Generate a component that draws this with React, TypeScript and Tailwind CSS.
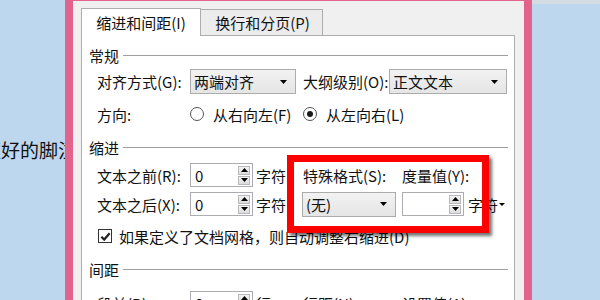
import type { ReactNode } from 'react'

const font = "font-['Microsoft_YaHei','Noto_Sans_CJK_SC',sans-serif]"

function Arrow() {
  return (
    <svg viewBox="0 0 7 4" className="h-[4px] w-[7px]" aria-hidden>
      <path d="M0 0h7L3.5 4z" fill="#000" />
    </svg>
  )
}

function Select({ value, width }: { value: string; width: string }) {
  return (
    <div
      className={`flex h-[25px] ${width} items-center justify-between border border-[#acacac] bg-gradient-to-b from-[#f2f2f2] to-[#e5e5e5] pl-[3px] pr-[8px]`}
    >
      <span>{value}</span>
      <Arrow />
    </div>
  )
}

function Spin({ value, width }: { value: string; width: string }) {
  return (
    <div className={`flex h-[24px] ${width} items-center justify-between border border-[#abadb3] bg-white pl-[4px] pr-[2px]`}>
      <span>{value}</span>
      <div className="flex flex-col gap-px">
        {[0, 1].map((i) => (
          <div
            key={i}
            className="flex h-[9px] w-[12px] items-center justify-center border border-[#b8b8b8] bg-gradient-to-b from-[#f4f4f4] to-[#dcdcdc]"
          >
            <svg viewBox="0 0 7 4" className={`h-[4px] w-[7px] ${i === 0 ? 'rotate-180' : ''}`} aria-hidden>
              <path d="M0 0h7L3.5 4z" fill="#000" />
            </svg>
          </div>
        ))}
      </div>
    </div>
  )
}

function Unit({ text }: { text: string }) {
  return (
    <span className="flex items-center gap-[1px]">
      {text}
      <svg viewBox="0 0 6 3" className="h-[3px] w-[6px]" aria-hidden>
        <path d="M0 0h6L3 3z" fill="#000" />
      </svg>
    </span>
  )
}

function Section({ title, className }: { title: string; className: string }) {
  return (
    <div className={`flex h-[20px] items-center gap-[4px] ${className}`}>
      <span>{title}</span>
      <div className="h-px flex-1 bg-[#a0a0a0]" />
    </div>
  )
}

function Row({ className, children }: { className: string; children: ReactNode }) {
  return <div className={`flex items-center pl-[8px] ${className}`}>{children}</div>
}

function Radio({ checked }: { checked?: boolean }) {
  return (
    <div className="flex h-[14px] w-[14px] items-center justify-center rounded-full border border-[#555] bg-white">
      {checked && <div className="h-[6px] w-[6px] rounded-full bg-[#1a1a1a]" />}
    </div>
  )
}

export default function App() {
  return (
    <div className={`flex h-[300px] w-[600px] overflow-hidden bg-[#bdd7ee] text-[15px] leading-none text-[#111] ${font}`}>
      <div className="flex w-[65px] shrink-0 items-center overflow-hidden">
        <span className="ml-[-18px] mt-[-1px] whitespace-nowrap text-[19px]">更好的脚注</span>
      </div>
      <div className="w-[8px] shrink-0 bg-[#e2648d]" />

      <div className="flex w-[451px] shrink-0 flex-col border-t border-[#e2648d] bg-[#f0f0f0] pl-[8px] pt-[7px]">
        <div className="flex items-end">
          <div className="z-10 mb-[-1px] flex h-[28px] w-[120px] items-center justify-center border border-b-0 border-[#adadad] bg-white pb-[1px]">
            缩进和间距(I)
          </div>
          <div className="flex h-[26px] w-[122px] items-center justify-center border border-b-0 border-l-0 border-[#adadad] bg-[#ececec] pl-[2px]">
            换行和分页(P)
          </div>
        </div>

        <div className="relative flex w-[434px] flex-1 flex-col border border-[#adadad] bg-white pl-[7px] pr-[6px] pt-[9px]">
          <Section title="常规" className="" />
          <Row className="mt-[4px] h-[25px]">
            <span className="w-[93px]">对齐方式(G):</span>
            <Select value="两端对齐" width="w-[106px]" />
            <span className="ml-[7px] w-[86px]">大纲级别(O):</span>
            <Select value="正文文本" width="w-[118px]" />
          </Row>
          <Row className="mt-[8px] h-[24px]">
            <span className="w-[93px]">方向:</span>
            <div className="flex w-[113px] items-center gap-[9px]">
              <Radio />
              <span>从右向左(F)</span>
            </div>
            <div className="flex items-center gap-[9px]">
              <Radio checked />
              <span>从左向右(L)</span>
            </div>
          </Row>

          <Section title="缩进" className="mt-[11px]" />
          <Row className="mt-[6px] h-[24px]">
            <span className="w-[93px]">文本之前(R):</span>
            <Spin value="0" width="w-[63px]" />
            <span className="ml-[3px] w-[47px]">
              <Unit text="字符" />
            </span>
            <span className="w-[99px]">特殊格式(S):</span>
            <span>度量值(Y):</span>
          </Row>
          <Row className="mt-[5px] h-[24px]">
            <span className="w-[93px]">文本之后(X):</span>
            <Spin value="0" width="w-[63px]" />
            <span className="ml-[3px] w-[46px]">
              <Unit text="字符" />
            </span>
            <Select value="(无)" width="w-[94px]" />
            <div className="ml-[6px]">
              <Spin value="" width="w-[62px]" />
            </div>
            <span className="ml-[4px]">
              <Unit text="字符" />
            </span>
          </Row>
          <Row className="mt-[10px] h-[20px]">
            <div className="ml-[1px] flex h-[14px] w-[14px] items-center justify-center border border-[#333] bg-white">
              <svg viewBox="0 0 12 12" className="h-[11px] w-[11px]" aria-hidden>
                <path d="M1.5 6.2 4.6 9.3 10.5 2.5" fill="none" stroke="#222" strokeWidth="2.4" />
              </svg>
            </div>
            <span className="ml-[7px]">如果定义了文档网格，则自动调整右缩进(D)</span>
          </Row>

          <Section title="间距" className="mt-[13px]" />
          <Row className="mt-[12px] h-[24px]">
            <span className="w-[93px]">段前(B):</span>
            <Spin value="0" width="w-[63px]" />
            <span className="ml-[3px] w-[47px]">
              <Unit text="行" />
            </span>
            <span className="w-[99px]">行距(N):</span>
            <span>设置值(A):</span>
          </Row>

          <div className="absolute left-[205px] top-[119px] h-[78px] w-[202px] border-[7px] border-[#ff0000] shadow-[3px_3px_3px_rgba(0,0,0,0.55)]" />
        </div>
      </div>

      <div className="w-[8px] shrink-0 bg-[#e2648d]" />
      <div className="flex flex-1 flex-col">
        <div className="h-[4px] bg-[#d3dbe3]" />
      </div>
    </div>
  )
}
